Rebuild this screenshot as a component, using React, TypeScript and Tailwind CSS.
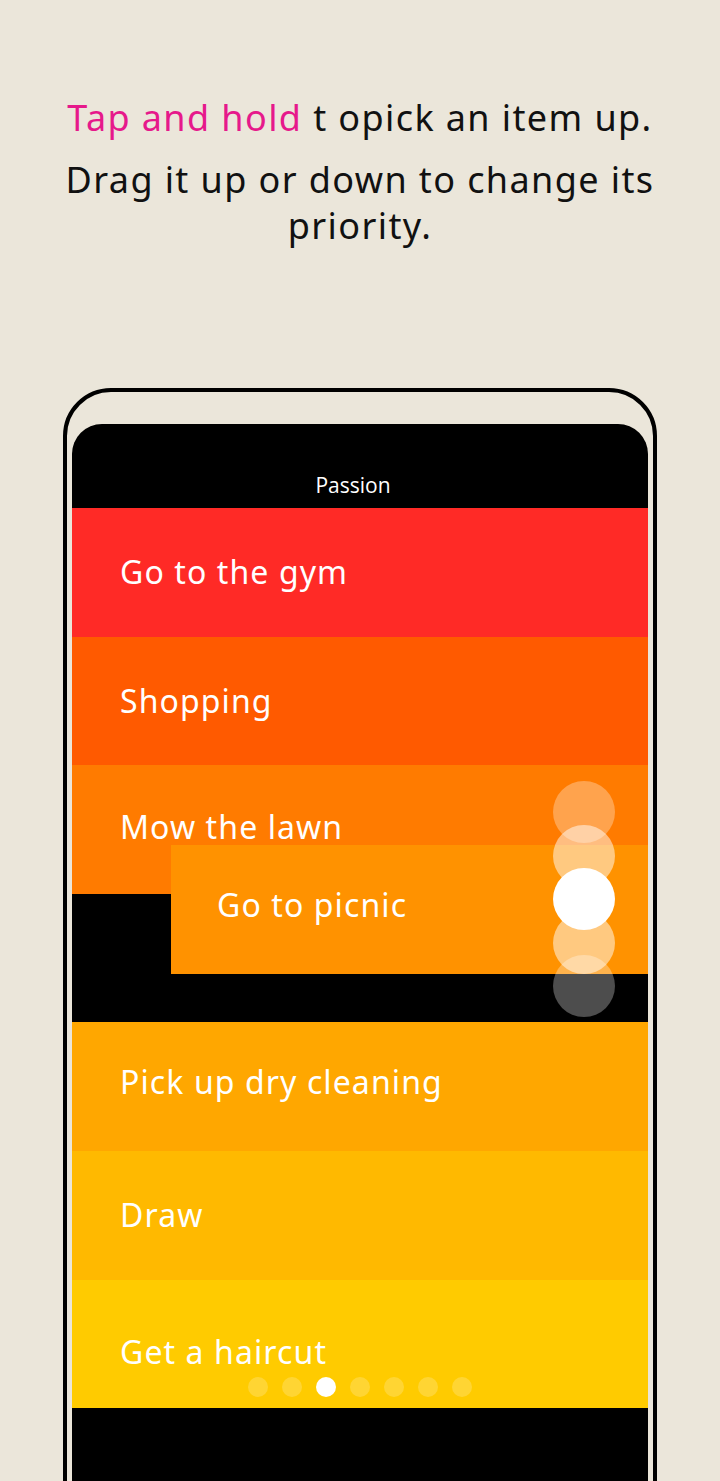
import React from "react";

const rows = [
  { label: "Go to the gym", color: "bg-[#ff2a26]", shift: "" },
  { label: "Shopping", color: "bg-[#ff5a00]", shift: "" },
  { label: "Mow the lawn", color: "bg-[#ff7b00]", shift: "pb-[4px]" },
  { label: "", color: "bg-black", shift: "" },
  { label: "Pick up dry cleaning", color: "bg-[#ffa700]", shift: "pb-[10px]" },
  { label: "Draw", color: "bg-[#ffb900]", shift: "" },
  { label: "Get a haircut", color: "bg-[#ffcb00]", shift: "pt-[16px]" },
];

export default function App() {
  return (
    <div
      className="w-[720px] h-[1481px] overflow-hidden bg-[#ebe6da] flex flex-col items-center"
      style={{ fontFamily: '"Noto Sans", "Open Sans", sans-serif' }}
    >
      <div className="pt-[95px] text-center text-[#111] text-[36px] leading-[46px] tracking-[1.4px] whitespace-nowrap">
        <p>
          <span className="text-[#e6198b]">Tap and hold</span> t opick an item up.
        </p>
        <p className="mt-[16px]">Drag it up or down to change its</p>
        <p>priority.</p>
      </div>

      <div className="mt-[139px] w-[594px] h-[1200px] shrink-0 border-[4px] border-black rounded-t-[48px] pl-[5px] pr-[5px] pt-[32px]">
        <div className="relative rounded-t-[30px] bg-black h-[1200px] overflow-hidden">
          <div
            className="h-[84px] flex items-end justify-center pb-[7px] pr-[14px] text-white text-[21px]"
            style={{ fontFamily: '"Open Sans", sans-serif' }}
          >
            Passion
          </div>
          {rows.map((r, i) => (
            <div
              key={i}
              className={`${r.color} ${r.shift} h-[128.6px] flex items-center pl-[48px] text-white text-[32px] tracking-[1.1px]`}
            >
              {r.label}
            </div>
          ))}

          <div className="absolute left-[99px] right-0 top-[421px] h-[129px] bg-[#ff9200] flex items-center pl-[46px] pb-[10px] text-white text-[32px] tracking-[1.1px]">
            Go to picnic
          </div>

          <div className="absolute left-[481px] top-[357px] flex flex-col items-center">
            <div className="w-[62px] h-[62px] rounded-full bg-white/30" />
            <div className="w-[62px] h-[62px] rounded-full bg-white/50 -mt-[18.5px]" />
            <div className="w-[62px] h-[62px] rounded-full bg-white -mt-[18.5px]" />
            <div className="w-[62px] h-[62px] rounded-full bg-white/50 -mt-[18.5px]" />
            <div className="w-[62px] h-[62px] rounded-full bg-white/30 -mt-[18.5px]" />
          </div>

          <div className="absolute left-0 right-0 top-[953px] flex justify-center gap-[14px]">
            {[0, 1, 2, 3, 4, 5, 6].map((d) => (
              <div
                key={d}
                className={`w-[20px] h-[20px] rounded-full ${d === 2 ? "bg-white" : "bg-white/20"}`}
              />
            ))}
          </div>
        </div>
      </div>
    </div>
  );
}
